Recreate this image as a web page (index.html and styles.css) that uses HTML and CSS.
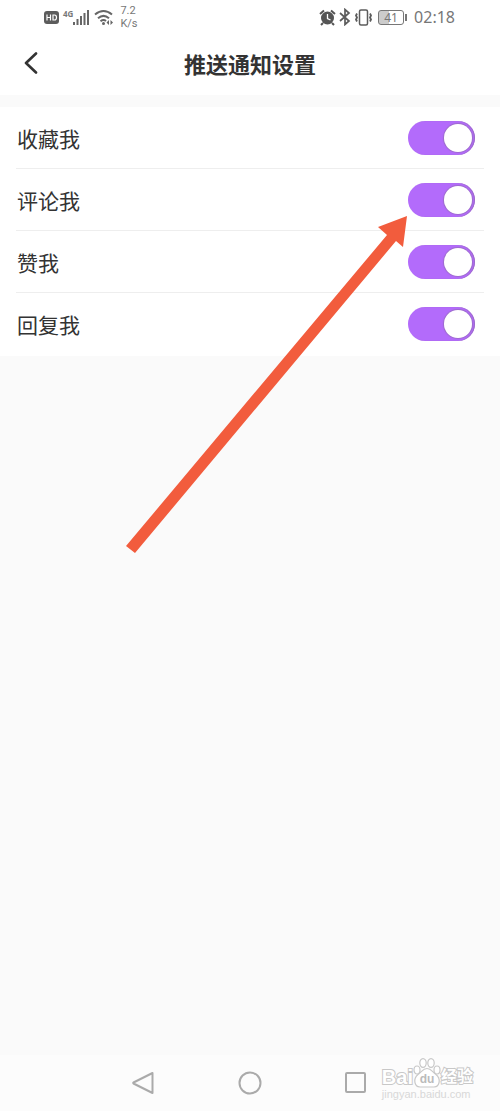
FILE: index.html
```html
<!DOCTYPE html>
<html lang="zh-CN">
<head>
<meta charset="utf-8">
<meta name="viewport" content="width=device-width, initial-scale=1">
<title>推送通知设置</title>
<link rel="stylesheet" href="styles.css">
</head>
<body>
<div class="screen">
  <div class="status">
    <div class="status-group">
      <svg class="icon" width="15" height="15" viewBox="0 0 15 15"><rect x="0" y="1" width="15" height="13" rx="3" fill="#5c5c5c"/><path d="M3 4.500v6M6.500 4.500v6M3 7.500h3.500M9 5v5h1.500q2 0 2-2.500t-2-2.500z" fill="none" stroke="#fff" stroke-width="1.200"/></svg>
      <div class="signal">
        <span class="net">4G</span>
        <svg class="icon" width="17" height="17" viewBox="0 0 17 17" fill="#666"><rect x="0" y="13" width="2" height="3"/><rect x="3.500" y="10" width="2" height="6"/><rect x="7" y="7" width="2" height="9"/><rect x="10.500" y="4" width="2" height="12"/><rect x="14" y="1" width="2" height="15"/></svg>
      </div>
      <svg class="icon" width="20" height="17" viewBox="0 0 20 17" fill="none" stroke="#666" stroke-width="2"><path d="M1 5.500Q9.500-1.500 18 5.500M4 9.200Q9.500 4.500 15 9.200M6.500 12.300Q9.500 10 12 12"/><circle cx="9.500" cy="14.500" r="1.500" fill="#666" stroke="none"/><path d="M15 11l-2.500 2.500L15 16zM16.500 11l2.500 2.500-2.500 2.500z" fill="#666" stroke="none"/></svg>
      <div class="speed"><span>7.2</span><span>K/s</span></div>
    </div>
    <div class="status-group status-right">
      <svg class="icon" width="17" height="17" viewBox="0 0 17 17" fill="none" stroke="#555"><circle cx="8.500" cy="9" r="6.500" fill="#555" stroke="none"/><path d="M1 5l4-3.500M16 5l-4-3.500M4 14l-2 2M13 14l2 2" stroke-width="2"/><path d="M8.500 5v4.500l3 1.500" stroke="#fff" stroke-width="1.300"/></svg>
      <svg class="icon" width="12" height="18" viewBox="0 0 12 18" fill="none" stroke="#5c5c5c" stroke-width="1.700"><path d="M1 5l9 8-4 3.500v-15L10 5l-9 8"/></svg>
      <svg class="icon" width="19" height="17" viewBox="0 0 19 17" fill="none" stroke="#5c5c5c" stroke-width="1.500"><rect x="5.500" y="1" width="8" height="15" rx="1.500"/><path d="M3 4.500L2 6.500l1 2-1 2 1 2M16 4.500l1 2-1 2 1 2-1 2" stroke-width="1.800"/></svg>
      <div class="battery"><span class="cell">41</span><span class="cap"></span></div>
      <time class="clock">02:18</time>
    </div>
  </div>

  <header class="header">
    <button class="back" type="button" aria-label="返回"><svg class="icon" width="14" height="22" viewBox="0 0 14 22"><path d="M12 1.500L2 11l10 9.500" fill="none" stroke="#333" stroke-width="2.600" stroke-linecap="round" stroke-linejoin="round"/></svg></button>
    <h1 class="title">推送通知设置</h1>
  </header>

  <main class="content">
    <div class="list">
      <label class="row"><span>收藏我</span><input class="switch" type="checkbox" role="switch" checked></label>
      <label class="row"><span>评论我</span><input class="switch" type="checkbox" role="switch" checked></label>
      <label class="row"><span>赞我</span><input class="switch" type="checkbox" role="switch" checked></label>
      <label class="row"><span>回复我</span><input class="switch" type="checkbox" role="switch" checked></label>
    </div>
  </main>

  <nav class="nav">
    <button class="nav-button" type="button" aria-label="返回"><svg class="icon" width="24" height="24" viewBox="0 0 24 24"><path d="M20.500 2v20L1.500 12.500Q1 12 1.500 11.500z"/></svg></button>
    <button class="nav-button" type="button" aria-label="主页"><svg class="icon" width="24" height="24" viewBox="0 0 24 24"><circle cx="12" cy="12" r="10.500"/></svg></button>
    <button class="nav-button" type="button" aria-label="最近任务"><svg class="icon" width="24" height="24" viewBox="0 0 24 24"><rect x="2" y="2" width="19" height="19" rx="1"/></svg></button>
  </nav>

  <svg class="arrow" width="284" height="340" viewBox="0 0 284 340" aria-hidden="true"><path d="M281 1L252 12l9 8L0 331l9 7L270 26l7 6z" fill="#f25c3d"/></svg>

  <div class="watermark">
    <div class="brand">
      <span>Bai</span>
      <svg class="paw" width="28" height="30" viewBox="0 0 28 30"><g fill="#fff" stroke="#c8c8c8" stroke-width="1.200"><ellipse cx="4" cy="12" rx="3" ry="4"/><ellipse cx="10" cy="5" rx="3.200" ry="4.300"/><ellipse cx="18" cy="5" rx="3.200" ry="4.300"/><ellipse cx="24" cy="12" rx="3" ry="4"/><path d="M14 10.500c-4 0-5 3-9 6-5 4-4 12 2 12.500h14c6-.5 7-8.500 2-12.500-4-3-5-6-9-6z"/></g><text class="du" x="14" y="25" text-anchor="middle">du</text></svg>
      <span class="exp">经验</span>
    </div>
    <div class="site">jingyan.baidu.com</div>
  </div>
</div>
</body>
</html>
```
FILE: styles.css
```css
* { box-sizing: border-box; }
body {
  margin: 0;
  background: #fafafa;
  color: #333;
  font-family: "Liberation Sans", "Noto Sans CJK SC", sans-serif;
}
.screen {
  position: relative;
  display: flex;
  flex-direction: column;
  min-height: 100vh;
}
.icon { display: block; flex: none; }
button { padding: 0; border: 0; background: none; }

.status {
  display: flex;
  justify-content: space-between;
  height: 34px;
  padding: 0 45px 0 44px;
  background: #fff;
  color: #777;
  font-family: "Noto Sans", sans-serif;
}
.status-group { display: flex; align-items: center; gap: 4px; }
.status-right { gap: 3px; }
.signal { display: flex; align-items: center; }
.net { align-self: flex-start; font: bold 8px/10px "Noto Sans", sans-serif; }
.speed {
  display: flex;
  flex-direction: column;
  padding-left: 2px;
  font-family: Roboto, sans-serif;
  font-size: 11px;
  line-height: 13px;
}
.battery { display: flex; align-items: center; gap: 1px; margin-left: 2px; }
.cell {
  width: 26px;
  height: 15px;
  border: 1px solid #777;
  border-radius: 3px;
  background: linear-gradient(90deg, #ccc 41%, #fff 41%);
  font-size: 12px;
  line-height: 13px;
  text-align: center;
}
.cap { width: 2px; height: 7px; background: #777; }
.clock { margin-left: 4px; font-size: 16px; line-height: 20px; }

.header {
  display: grid;
  grid-template-columns: 44px 1fr 44px;
  align-items: center;
  height: 61px;
  padding-bottom: 3px;
  background: #fff;
}
.back { display: flex; justify-content: flex-end; padding-right: 6px; }
.title {
  grid-column: 2;
  margin: 0;
  font-family: KaiTi, STKaiti, "Noto Sans CJK SC", sans-serif;
  font-size: 22px;
  line-height: 30px;
  font-weight: bold;
  text-align: center;
}

.content { flex: 1; padding-top: 12px; }
.list { padding: 0 16px 1px; background: #fff; }
.row {
  display: flex;
  align-items: center;
  justify-content: space-between;
  height: 62px;
  padding: 0 9px 0 1px;
  border-bottom: 1px solid #eee;
  font-family: KaiTi, STKaiti, "Noto Sans CJK SC", sans-serif;
  font-size: 21px;
  line-height: 28px;
}
.row:last-child { border-bottom-color: transparent; }
.switch {
  appearance: none;
  display: flex;
  justify-content: flex-end;
  flex: none;
  width: 67px;
  height: 34px;
  margin: 0;
  padding: 3px;
  border-radius: 17px;
  background: #b36bfb;
  box-shadow: inset -1px 0 1px #9b6cc4;
}
.switch::before {
  content: "";
  width: 28px;
  height: 28px;
  border-radius: 50%;
  background: #fff;
  box-shadow: 0 0 1px 1px #9c6bcb;
}
.switch:not(:checked) { justify-content: flex-start; background: #ccc; }

.nav {
  display: flex;
  justify-content: center;
  gap: 82px;
  height: 56px;
  background: #fcfcfc;
}
.nav-button { display: flex; align-items: center; }
.nav-button svg {
  fill: none;
  stroke: #aaa;
  stroke-width: 2;
  stroke-linejoin: round;
}

.arrow { position: absolute; left: 126px; top: 215px; }

.watermark {
  position: absolute;
  right: 27px;
  bottom: 11px;
  color: #fff;
  -webkit-text-stroke: 2px #c8c8c8;
  paint-order: stroke fill;
}
.brand {
  display: flex;
  align-items: flex-end;
  font-size: 20px;
  line-height: 22px;
  font-weight: bold;
}
.paw { flex: none; paint-order: normal; }
.du { fill: #bbb; stroke: none; -webkit-text-stroke: 0; font: bold 12px "Liberation Sans", sans-serif; }
.exp { font-size: 16px; }
.site {
  color: #d8d8d8;
  -webkit-text-stroke: 0;
  font-size: 11px;
  line-height: 12px;
}
```
